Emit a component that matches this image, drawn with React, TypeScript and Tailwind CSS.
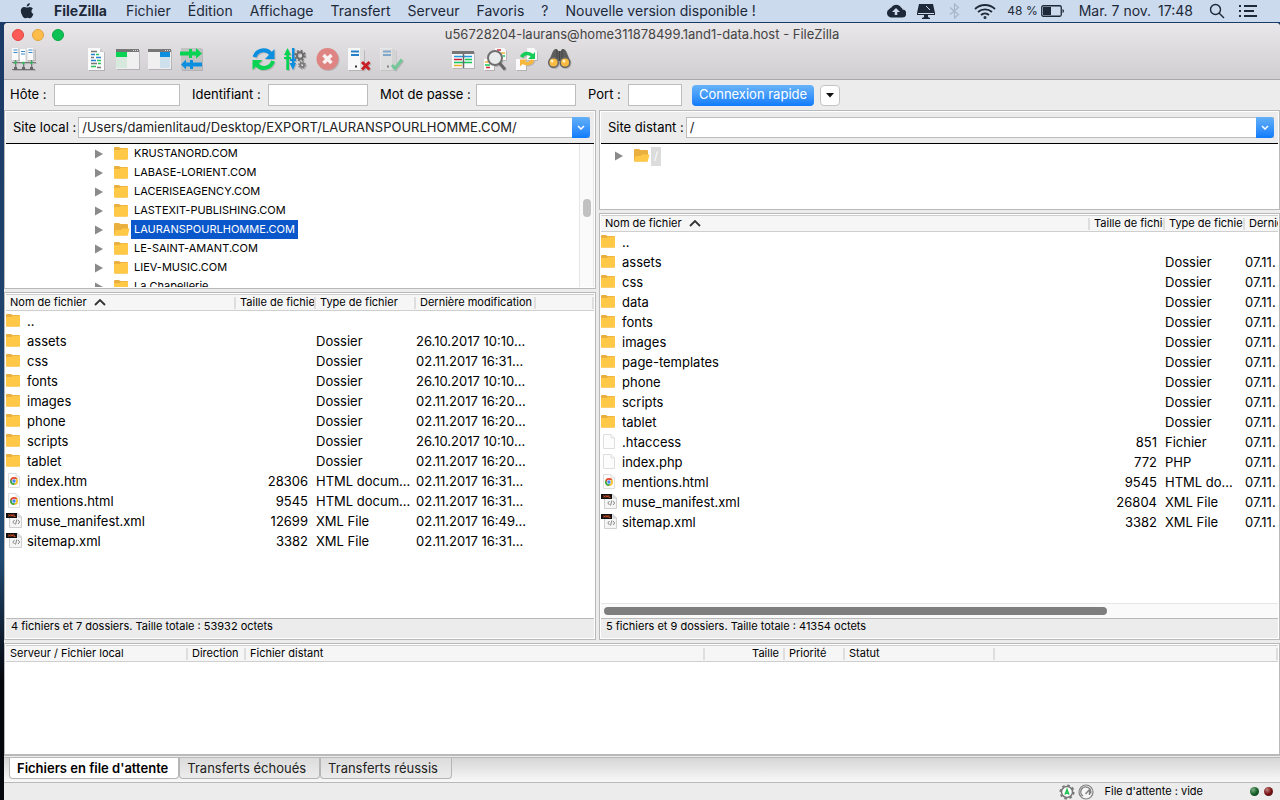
import React, { useState } from 'react';

type Kind = 'folder' | 'blank' | 'html' | 'xml';
type Row = { name: string; kind: Kind; size?: string; type?: string; date?: string };

const MENUS = ['Fichier', 'Édition', 'Affichage', 'Transfert', 'Serveur', 'Favoris', '?', 'Nouvelle version disponible !'];

const TREE = [
  'KRUSTANORD.COM',
  'LABASE-LORIENT.COM',
  'LACERISEAGENCY.COM',
  'LASTEXIT-PUBLISHING.COM',
  'LAURANSPOURLHOMME.COM',
  'LE-SAINT-AMANT.COM',
  'LIEV-MUSIC.COM',
  'La Chapellerie',
];

const LOCAL: Row[] = [
  { name: '..', kind: 'folder' },
  { name: 'assets', kind: 'folder', type: 'Dossier', date: '26.10.2017 10:10...' },
  { name: 'css', kind: 'folder', type: 'Dossier', date: '02.11.2017 16:31...' },
  { name: 'fonts', kind: 'folder', type: 'Dossier', date: '26.10.2017 10:10...' },
  { name: 'images', kind: 'folder', type: 'Dossier', date: '02.11.2017 16:20...' },
  { name: 'phone', kind: 'folder', type: 'Dossier', date: '02.11.2017 16:20...' },
  { name: 'scripts', kind: 'folder', type: 'Dossier', date: '26.10.2017 10:10...' },
  { name: 'tablet', kind: 'folder', type: 'Dossier', date: '02.11.2017 16:20...' },
  { name: 'index.htm', kind: 'html', size: '28306', type: 'HTML docum...', date: '02.11.2017 16:31...' },
  { name: 'mentions.html', kind: 'html', size: '9545', type: 'HTML docum...', date: '02.11.2017 16:31...' },
  { name: 'muse_manifest.xml', kind: 'xml', size: '12699', type: 'XML File', date: '02.11.2017 16:49...' },
  { name: 'sitemap.xml', kind: 'xml', size: '3382', type: 'XML File', date: '02.11.2017 16:31...' },
];

const REMOTE: Row[] = [
  { name: '..', kind: 'folder' },
  ...['assets', 'css', 'data', 'fonts', 'images', 'page-templates', 'phone', 'scripts', 'tablet'].map(
    (name): Row => ({ name, kind: 'folder', type: 'Dossier', date: '07.11.' })
  ),
  { name: '.htaccess', kind: 'blank', size: '851', type: 'Fichier', date: '07.11.' },
  { name: 'index.php', kind: 'blank', size: '772', type: 'PHP', date: '07.11.' },
  { name: 'mentions.html', kind: 'html', size: '9545', type: 'HTML do...', date: '07.11.' },
  { name: 'muse_manifest.xml', kind: 'xml', size: '26804', type: 'XML File', date: '07.11.' },
  { name: 'sitemap.xml', kind: 'xml', size: '3382', type: 'XML File', date: '07.11.' },
];

/* ---------- file icons ---------- */

const Folder: React.FC<{ open?: boolean }> = ({ open }) => (
  <svg width="16" height="14" viewBox="0 0 16 14" className="block shrink-0">
    <path d="M0 1Q0 0 1 0H5L6.500 1H13Q14 1 14 2V11.500Q14 12.500 13 12.500H1Q0 12.500 0 11.500Z" fill="#e9b03f" />
    {open ? (
      <path d="M0 12.500L1.500 7H7L8 5.500H15.500L14 11.500Q13.800 12.500 13 12.500Z" fill="#ffc847" />
    ) : (
      <path d="M0 3H5.500L7 1.800H14V11.500Q14 12.500 13 12.500H1Q0 12.500 0 11.500Z" fill="#ffc847" />
    )}
  </svg>
);

const Page: React.FC<{ children?: React.ReactNode }> = ({ children }) => (
  <svg width="16" height="16" viewBox="0 0 16 16" className="block shrink-0">
    <path d="M2.500 .5H10L13.500 4V14.500H2.500Z" fill="#fdfdfd" stroke="#dedede" />
    <path d="M10 .5V4H13.500" fill="#f2f2f2" stroke="#e2e2e2" />
    {children}
  </svg>
);

const FileIcon: React.FC<{ kind: Kind }> = ({ kind }) => {
  if (kind === 'folder') return <Folder />;
  if (kind === 'blank') return <Page />;
  if (kind === 'html')
    return (
      <Page>
        <circle cx="8" cy="8" r="4" fill="#fbc02d" />
        <path d="M4.500 6A4 4 0 0 1 11.500 6H8L6.200 9Z" fill="#e2453a" />
        <path d="M4.500 6A4 4 0 0 0 7.800 12L9.700 9L6.300 9Z" fill="#35a853" />
        <circle cx="8" cy="8" r="2.200" fill="#fff" />
        <circle cx="8" cy="8" r="1.700" fill="#4384f3" />
      </Page>
    );
  return (
    <svg width="16" height="16" viewBox="0 0 16 16" className="block shrink-0">
      <path d="M3.500 .5H12L15.500 4V14.500H3.500Z" fill="#f5f5f5" stroke="#cfcfcf" />
      <path d="M12 .5V4H15.500" fill="#ddd" stroke="#cfcfcf" />
      <path d="M0 0H11V5H0Z" fill="#111" />
      <path d="M2.500 1.500L4 3.500M4 1.500L2.500 3.500M5 3.500V1.500L6 3L7 1.500V3.500M8 1.500V3.500H9.500" stroke="#e8562a" strokeWidth=".8" fill="none" />
      <path d="M8.500 7L6.800 9L8.500 11M12 7L13.700 9L12 11M10.800 6.500L9.500 11.500" stroke="#888" fill="none" />
    </svg>
  );
};

/* ---------- toolbar icons ---------- */

const Svg: React.FC<{ children: React.ReactNode }> = ({ children }) => (
  <svg width="24" height="24" viewBox="0 0 24 24" fill="none" className="block drop-shadow-[1px_1px_0px_rgba(0,0,0,0.15)]">
    {children}
  </svg>
);

const SiteManagerIcon = () => (
  <Svg>
    <path d="M0 0H6L8 1V12H0ZM15 0H21L23 1V12H15Z" fill="#f9f9f9" />
    <path d="M6 0L8 1V12H6ZM21 0L23 1V12H21Z" fill="#cfcfcf" />
    <path d="M8 1H14L15.500 2V14H8Z" fill="#fff" />
    <path d="M13.500 1L15.500 2V14H13.500Z" fill="#d2d2d2" />
    <path d="M1.500 2H5.500M1.500 4.500H5.500M9 3.500H13M9 6H13M16.500 2H20.500M16.500 4.500H20.500" stroke="#3a8ccd" />
    <path d="M0 14.500H24M0 21.500H23M3.500 12V21M11.500 14V21M19.500 12V21" stroke="#777" />
    <path d="M2.500 14.500H4.500M10.500 15H12.500M18.500 14.500H20.500" stroke="#25c356" strokeWidth="2.500" />
    <path d="M2 20.500H5M10 20.500H13M18 20.500H21" stroke="#666" strokeWidth="3" />
  </Svg>
);

const LogIcon = () => (
  <Svg>
    <path d="M4 0H16L20 4V22H4Z" fill="#fbfbfb" />
    <path d="M16 0V4H20Z" fill="#ccc" />
    <path d="M7 3.500H13M7 9.500H10M7 15.500H13M13 19.500H17" stroke="#777" strokeWidth="1.500" />
    <path d="M7 6.500H11M12 9.500H17M7 12.500H12" stroke="#2583d1" strokeWidth="1.500" />
    <path d="M12 6.500H15M13 12.500H17M14 15.500H17M7 18.500H12" stroke="#27c55a" strokeWidth="1.500" />
  </Svg>
);

const PaneIcon: React.FC<{ side: 'left' | 'right' }> = ({ side }) => (
  <Svg>
    <path d="M0 1H23V21H0Z" fill="#f0f0f0" />
    <path d="M0 1H23V4H0Z" fill="#777" />
    <path d="M17 2.500H18M19 2.500H20M21 2.500H22" stroke="#ddd" />
    {side === 'left' ? (
      <>
        <path d="M0 4H11V9H0Z" fill="#08d353" />
        <path d="M0 9H11V20H0Z" fill="#d6e9dc" />
      </>
    ) : (
      <>
        <path d="M12 4H22V9H12Z" fill="#0d8fe0" />
        <path d="M12 9H22V20H12Z" fill="#cfe0ed" />
      </>
    )}
  </Svg>
);

const QueueIcon = () => (
  <Svg>
    <path d="M1 0H22V22H1Z" fill="#c2c2c2" />
    <path d="M0 3.500H9V1H12V3.500H16V0L22 5.500L16 10.500V7.500H12V10H9V7.500H0Z" fill="#08d353" />
    <path d="M22 14.500H13V12H10V14.500H6V11.500L1 16.500L6 21.500V18.500H10V21H13V18.500H22Z" fill="#0d8fe0" />
  </Svg>
);

const RefreshIcon = () => (
  <Svg>
    <path d="M2.500 9A9.500 9.500 0 0 1 19 6" stroke="#0d8fe0" strokeWidth="4" />
    <path d="M22.500 1V11H13Z" fill="#0d8fe0" />
    <path d="M21 13A9.500 9.500 0 0 1 5 17" stroke="#08d353" strokeWidth="4" />
    <path d="M.5 22V12H10.500Z" fill="#08d353" />
  </Svg>
);

const ProcessIcon = () => (
  <Svg>
    <path d="M0 7L3.500 0L7 7H5V9H7V11H5V22H2.300V11H0V9H2.300V7Z" fill="#08d353" />
    <path d="M8 0H10.500V11H12V13H10.500V15H12L9 22L5.500 15H8V13H6V11H8Z" fill="#0d8fe0" />
    <circle cx="16" cy="7.500" r="3.200" stroke="#6b6b6b" strokeWidth="2" />
    <circle cx="16" cy="7.500" r="4.800" stroke="#6b6b6b" strokeWidth="2" strokeDasharray="1.900 1.870" />
    <circle cx="18" cy="17" r="2" stroke="#777" strokeWidth="1.500" />
    <circle cx="18" cy="17" r="3.200" stroke="#777" strokeWidth="1.500" strokeDasharray="1.300 1.213" />
  </Svg>
);

const CancelIcon = () => (
  <Svg>
    <circle cx="11.500" cy="11" r="11" fill="#de8583" />
    <path d="M7.500 7L15.500 15M15.500 7L7.500 15" stroke="#f8f2f2" strokeWidth="3.500" />
  </Svg>
);

const ServerIcon: React.FC<{ ok?: boolean }> = ({ ok }) => (
  <Svg>
    <g opacity={ok ? 0.45 : 1}>
      <path d="M0 0H13L16 2V22H0Z" fill="#f8f8f8" />
      <path d="M12 0H13L16 2V22H12Z" fill="#ddd" />
      <path d="M3 3.500H11M3 7H11" stroke="#267fc9" strokeWidth="2" />
      <path d="M7 18.500H9" stroke="#333" strokeWidth="2" />
    </g>
    {ok ? (
      <path d="M12 17L15 20.500L22 11.500" stroke="#73c698" strokeWidth="3" />
    ) : (
      <path d="M14 14L21.500 21.500M21.500 14L14 21.500" stroke="#c81f27" strokeWidth="3" />
    )}
  </Svg>
);

const CompareIcon = () => (
  <Svg>
    <path d="M0 4H22V20H0Z" fill="#f8f8f8" />
    <path d="M0 3H22V6H0Z" fill="#777" />
    <path d="M2 8.500H20" stroke="#1d9ae1" strokeWidth="1.500" />
    <path d="M2 11.500H10" stroke="#c31f35" strokeWidth="1.500" />
    <path d="M13 11.500H20M2 14.500H20" stroke="#12c755" strokeWidth="1.500" />
    <path d="M2 17.500H10" stroke="#f0ac2e" strokeWidth="1.500" />
    <path d="M11.500 6V20" stroke="#666" strokeWidth="1.500" />
  </Svg>
);

const FindIcon = () => (
  <Svg>
    <path d="M11 0H20L22 2V12H11ZM0 11H10V22H0Z" fill="#fafafa" />
    <path d="M13 2H17M2 19.500H6" stroke="#d42d37" strokeWidth="1.500" />
    <path d="M17 5H21M1 14H5" stroke="#f1b53b" strokeWidth="1.500" />
    <path d="M19 8H21M1 17H6" stroke="#13c953" strokeWidth="1.500" />
    <circle cx="11" cy="10" r="7" fill="#e9eaeb" stroke="#707070" strokeWidth="2" />
    <path d="M15.500 15L21 21.500" stroke="#666" strokeWidth="3" />
  </Svg>
);

const SyncIcon = () => (
  <Svg>
    <path d="M11 0H18L21 3V12H11ZM0 11H10V22H0Z" fill="#fafafa" />
    <path d="M5.500 9A6.500 6.500 0 0 1 16 7.500" stroke="#13cd57" strokeWidth="3.500" />
    <path d="M19 4V11H12Z" fill="#13cd57" />
    <path d="M17 12A6.500 6.500 0 0 1 7.500 14.500" stroke="#f6b73c" strokeWidth="3.500" />
    <path d="M4 18.500V11.500H11.500Z" fill="#f6b73c" />
  </Svg>
);

const BinocularsIcon = () => (
  <Svg>
    <path d="M7 1H9L10 3H13L14 1H16L18 3L22.500 14L17 18L13 13H10L6 18L.5 14L5 3Z" fill="#5d5d5d" />
    <path d="M11.500 3V13M9 2V11M14 2V11" stroke="#444" />
    <circle cx="5.500" cy="14.500" r="4.800" fill="#f9bc40" stroke="#666" strokeWidth="1.500" />
    <circle cx="17" cy="14.500" r="4.800" fill="#f9bc40" stroke="#666" strokeWidth="1.500" />
    <circle cx="4" cy="13" r="1.500" fill="#fff3cf" />
    <circle cx="16" cy="13" r="1.500" fill="#fff3cf" />
  </Svg>
);

const TOOLBAR = [
  [{ label: 'Gestionnaire de sites', icon: <SiteManagerIcon /> }],
  [
    { label: 'Journal', icon: <LogIcon /> },
    { label: 'Arborescence locale', icon: <PaneIcon side="left" /> },
    { label: 'Arborescence distante', icon: <PaneIcon side="right" /> },
    { label: 'File de transfert', icon: <QueueIcon /> },
  ],
  [
    { label: 'Actualiser', icon: <RefreshIcon /> },
    { label: 'Traiter la file', icon: <ProcessIcon /> },
    { label: 'Annuler', icon: <CancelIcon /> },
    { label: 'Déconnecter', icon: <ServerIcon /> },
    { label: 'Reconnecter', icon: <ServerIcon ok /> },
  ],
  [
    { label: 'Filtres', icon: <CompareIcon /> },
    { label: 'Comparer', icon: <FindIcon /> },
    { label: 'Navigation synchronisée', icon: <SyncIcon /> },
    { label: 'Rechercher', icon: <BinocularsIcon /> },
  ],
];

/* ---------- top of the screen ---------- */

const MenuBar = () => (
  <header className="flex h-[23px] shrink-0 items-center border-b border-[#1b3a66] bg-[#cbdaed] text-sm text-[#1d2939]">
    <button aria-label="Apple" className="mx-5 block">
      <svg width="14" height="16" viewBox="0 0 14 16" fill="#1d2939" className="block">
        <path d="M9.800 0Q9.900 1.500 9 2.500Q8 3.700 6.700 3.600Q6.600 2.200 7.500 1.200Q8.400.2 9.800 0ZM12.900 5.500Q11.400 6.500 11.400 8.200Q11.500 10.200 13.400 11Q12.900 12.500 11.900 13.900Q11 15.200 10 15.200Q9.400 15.200 8.700 14.900Q7.500 14.400 6.300 14.900Q5.500 15.300 5 15.300Q3.900 15.200 2.700 13.500Q.6 10.500.8 7.600Q1.100 4.500 3.700 4Q4.600 3.900 5.700 4.300Q6.900 4.800 7.700 4.400Q9 3.900 10 3.900Q11.900 4.100 12.900 5.500Z" />
      </svg>
    </button>
    <nav className="flex gap-[17px] whitespace-nowrap">
      <button className="mr-0.5 font-bold">FileZilla</button>
      {MENUS.map((m) => (
        <button key={m}>{m}</button>
      ))}
    </nav>
    <div className="ml-auto mr-[22px] flex items-center whitespace-nowrap">
      <svg width="20" height="14" viewBox="0 0 20 14" className="mr-[11px]">
        <path d="M5 13.500A4.500 4.500 0 0 1 3.500 5Q4 3.500 5.500 3.500A5.500 5.500 0 0 1 15 3.500Q16.500 4 16.500 5.500A4 4 0 0 1 16 13.500Z" fill="#1d2939" />
        <path d="M10 4L14 8H11.300V11H8.700V8H6Z" fill="#cbdaed" />
      </svg>
      <svg width="18" height="15" viewBox="0 0 18 15" className="mr-[14px]">
        <path d="M2 0H16L18 9V11H11V13L13 14V15H5V14L7 13V11H0V9Z" fill="#1d2939" />
        <path d="M9 2L13 6M1 9.500H17" stroke="#cbdaed" />
      </svg>
      <svg width="11" height="16" viewBox="0 0 11 16" fill="none" stroke="#a8b6c9" strokeWidth="1.200" className="mr-[14px]">
        <path d="M1 4.500L9.500 11.500L5.500 15V1L9.500 4.500L1 11.500" />
      </svg>
      <svg width="22" height="15" viewBox="0 0 22 15" fill="none" stroke="#1d2939" strokeWidth="1.800" className="mr-[11px]">
        <path d="M1 5A14.500 14.500 0 0 1 21 5M4 8A10.500 10.500 0 0 1 18 8M7 11A6 6 0 0 1 15 11" />
        <circle cx="11" cy="13.500" r=".6" />
      </svg>
      <span className="mr-[3px] text-xs">48 %</span>
      <svg width="24" height="12" viewBox="0 0 24 12" className="mr-[14px]">
        <rect x=".75" y=".75" width="19.500" height="10.500" rx="1.500" fill="none" stroke="#1d2939" strokeWidth="1.300" />
        <path d="M2 2H10V10H2ZM21.500 4Q23 4.500 23 6T21.500 8Z" fill="#1d2939" />
      </svg>
      <span className="mr-[7px]">Mar. 7 nov.</span>
      <span className="mr-4">17:48</span>
      <svg width="16" height="16" viewBox="0 0 16 16" fill="none" stroke="#1d2939" strokeWidth="1.400" className="mr-[14px]">
        <circle cx="6.500" cy="6.500" r="5" />
        <path d="M10 10L15 15" />
      </svg>
      <svg width="19" height="12" viewBox="0 0 19 12" stroke="#1d2939" strokeWidth="2" fill="none">
        <path d="M0 1H2M0 6H2M0 11H2M5 1H18M5 6H15M5 11H18" />
      </svg>
    </div>
  </header>
);

const TitleBar = () => (
  <div className="h-[57px] shrink-0 rounded-t border-b border-[#a9a8a9] bg-gradient-to-b from-[#e9e7e9] to-[#d0ced0]">
    <div className="relative flex h-[23px] items-center justify-center">
      <div className="absolute left-2 flex gap-2">
        <button aria-label="Fermer" className="size-3 rounded-full border border-[#e2463f] bg-[#fc5b57]" />
        <button aria-label="Réduire" className="size-3 rounded-full border border-[#e0a33d] bg-[#fdbd4a]" />
        <button aria-label="Agrandir" className="size-3 rounded-full border border-[#0ba945] bg-[#0ac255]" />
      </div>
      <h1 className="text-[13px] text-[#444]">u56728204-laurans@home311878499.1and1-data.host - FileZilla</h1>
    </div>
    <div className="flex gap-12 px-2 pt-0.5">
      {TOOLBAR.map((group, i) => (
        <div key={i} className="flex gap-2">
          {group.map((t) => (
            <button key={t.label} aria-label={t.label}>
              {t.icon}
            </button>
          ))}
        </div>
      ))}
    </div>
  </div>
);

const INPUT = 'h-[22px] border border-[#bdbdbd] bg-white px-1 outline-none';

const QuickConnect = () => (
  <form className="flex h-[30px] shrink-0 items-center pl-[6px] text-[13px]" onSubmit={(e) => e.preventDefault()}>
    <label htmlFor="host" className="w-11">Hôte :</label>
    <input id="host" className={`mr-3 w-[126px] ${INPUT}`} />
    <label htmlFor="user" className="w-[76px]">Identifiant :</label>
    <input id="user" className={`mr-3 w-[100px] ${INPUT}`} />
    <label htmlFor="pass" className="w-24">Mot de passe :</label>
    <input id="pass" type="password" className={`mr-3 w-[100px] ${INPUT}`} />
    <label htmlFor="port" className="w-10">Port :</label>
    <input id="port" className={`mr-[10px] w-[54px] ${INPUT}`} />
    <button className="h-[21px] w-[122px] whitespace-nowrap rounded bg-gradient-to-b from-[#68b4f9] to-[#0a7bfb] text-white">Connexion rapide</button>
    <button aria-label="Historique" className="ml-[6px] flex h-[21px] w-5 items-center justify-center rounded border border-[#c4c4c4] bg-white">
      <svg width="8" height="5" viewBox="0 0 8 5">
        <path d="M0 0H8L4 4.500Z" fill="#111" />
      </svg>
    </button>
  </form>
);

/* ---------- panes ---------- */

const SiteBar: React.FC<{ id: string; label: string; path: string }> = ({ id, label, path }) => (
  <div className="flex h-8 shrink-0 items-center gap-0.5 border-b border-black bg-[#ececec] pl-[7px] pr-1 text-[13px]">
    <label htmlFor={id} className="whitespace-nowrap">{label}</label>
    <div className="relative flex-1">
      <select id={id} className="block h-[21px] w-full appearance-none border border-[#bdbdbd] bg-white pl-[3px] text-[#222] outline-none">
        <option>{path}</option>
      </select>
      <span className="pointer-events-none absolute inset-y-0 right-0 flex w-[18px] items-center justify-center rounded-r bg-gradient-to-b from-[#62b0f8] to-[#0a7bfb]">
        <svg width="8" height="5" viewBox="0 0 8 5" fill="none" stroke="#fff" strokeWidth="1.500">
          <path d="M1 1L4 4L7 1" />
        </svg>
      </span>
    </div>
  </div>
);

const Disclosure = () => (
  <svg width="8" height="10" viewBox="0 0 8 10" className="mr-[11px] block shrink-0">
    <path d="M0 .5L8 5L0 9.500Z" fill="#8a8a8a" />
  </svg>
);

const HeadCell: React.FC<{ label?: string; sorted?: boolean; right?: boolean }> = ({ label, sorted, right }) => (
  <th className="h-[17px] border-y border-[#cfcfcf] bg-[#f6f6f6] p-0 font-normal">
    <div className="flex h-[15px] items-center">
      <button className={`flex flex-1 items-center gap-[7px] overflow-hidden whitespace-nowrap pl-1 leading-[15px] ${right ? 'justify-end pr-1' : ''}`}>
        {label}
        {sorted && (
          <svg width="12" height="7" viewBox="0 0 12 7" fill="none" stroke="#333" strokeWidth="1.800">
            <path d="M1 6L6 1L11 6" />
          </svg>
        )}
      </button>
      <span className="h-3 w-0.5 shrink-0 bg-[#dedede]" />
    </div>
  </th>
);

const FileTable: React.FC<{ rows: Row[]; className: string; cols: React.ReactNode; heads: string[] }> = ({ rows, className, cols, heads }) => (
  <table className={`table-fixed border-separate border-spacing-0 text-left ${className}`}>
    {cols}
    <thead className="text-[11px]">
      <tr>
        {heads.map((h, i) => (
          <HeadCell key={i} label={h} sorted={i === 0} />
        ))}
      </tr>
    </thead>
    <tbody className="text-[13px] leading-5">
      {rows.map((r) => (
        <tr key={r.name}>
          <td className="h-5 p-0">
            <div className="flex h-5 items-center gap-[5px]">
              <FileIcon kind={r.kind} />
              {r.name}
            </div>
          </td>
          <td className="p-0 pr-2 text-right">{r.size}</td>
          <td className="whitespace-nowrap p-0">{r.type}</td>
          <td className="whitespace-nowrap p-0">{r.date}</td>
          {heads.length > 4 && <td className="p-0" />}
        </tr>
      ))}
    </tbody>
  </table>
);

const HEADS = ['Nom de fichier', 'Taille de fichier', 'Type de fichier', 'Dernière modification'];
const PANE = 'flex flex-col overflow-hidden border border-[#b9b9b9] bg-white p-px';
const SUMMARY = 'h-5 shrink-0 border-t border-[#b9b9b9] bg-[#ececec] pl-[5px] text-[11px] leading-[15px]';

const LocalSide = () => {
  const [selected, setSelected] = useState('LAURANSPOURLHOMME.COM');
  return (
    <section className="flex min-h-0 min-w-0 flex-col gap-[3px]">
      <div className={`h-[179px] shrink-0 ${PANE}`}>
        <SiteBar id="local" label="Site local :" path="/Users/damienlitaud/Desktop/EXPORT/LAURANSPOURLHOMME.COM/" />
        <div className="flex min-h-0 flex-1">
          <ul className="flex-1 overflow-hidden text-[11px]">
            {TREE.map((name) => (
              <li key={name} className="flex h-[19px] items-center pl-[89px]">
                <Disclosure />
                <Folder open={name === selected} />
                <button
                  onClick={() => setSelected(name)}
                  className={`ml-px h-[19px] px-[3px] ${name === selected ? 'bg-[#0a57cb] text-white' : ''}`}
                >
                  {name}
                </button>
              </li>
            ))}
          </ul>
          <div className="w-[15px] border-x border-[#e6e6e6] bg-[#fafafa] px-[3px] pt-[55px]">
            <div className="h-[18px] w-2 rounded-full bg-[#c1c1c1]" />
          </div>
        </div>
      </div>
      <div className={`flex-1 ${PANE}`}>
        <div className="min-h-0 flex-1 overflow-hidden">
          <FileTable
            rows={LOCAL}
            className="w-full"
            heads={[...HEADS, '']}
            cols={
              <colgroup>
                <col className="w-[230px]" />
                <col className="w-20" />
                <col className="w-[100px]" />
                <col className="w-[120px]" />
                <col />
              </colgroup>
            }
          />
        </div>
        <p className={SUMMARY}>4 fichiers et 7 dossiers. Taille totale : 53932 octets</p>
      </div>
    </section>
  );
};

const RemoteSide = () => (
  <section className="flex min-h-0 min-w-0 flex-col gap-[3px]">
    <div className={`h-[100px] shrink-0 ${PANE}`}>
      <SiteBar id="remote" label="Site distant :" path="/" />
      <div className="flex h-6 items-center pl-[14px] text-[11px]">
        <Disclosure />
        <Folder open />
        <button className="ml-px h-[19px] bg-[#dcdcdc] px-[3px] text-white">/</button>
      </div>
    </div>
    <div className={`flex-1 ${PANE}`}>
      <div className="min-h-0 flex-1 overflow-hidden">
        <FileTable
          rows={REMOTE}
          className="w-[905px]"
          heads={HEADS}
          cols={
            <colgroup>
              <col className="w-[489px]" />
              <col className="w-[75px]" />
              <col className="w-20" />
              <col />
            </colgroup>
          }
        />
      </div>
      <div className="h-[15px] shrink-0 border-t border-[#e6e6e6] bg-[#fafafa] px-[3px] pt-[3px]">
        <div className="h-2 w-3/4 rounded-full bg-[#7e7e7e]" />
      </div>
      <p className={SUMMARY}>5 fichiers et 9 dossiers. Taille totale : 41354 octets</p>
    </div>
  </section>
);

const TABS = ["Fichiers en file d'attente", 'Transferts échoués', 'Transferts réussis'];

const Queue = () => {
  const [tab, setTab] = useState(0);
  return (
    <section className="mt-[3px] shrink-0">
      <div className="h-[113px] border border-b-2 border-[#b9b9b9] bg-white p-px">
        <table className="w-full table-fixed border-separate border-spacing-0 text-left text-[11px]">
          <colgroup>
            <col className="w-[182px]" />
            <col className="w-[58px]" />
            <col className="w-[459px]" />
            <col className="w-20" />
            <col className="w-[60px]" />
            <col className="w-[150px]" />
            <col />
          </colgroup>
          <thead>
            <tr>
              <HeadCell label="Serveur / Fichier local" />
              <HeadCell label="Direction" />
              <HeadCell label="Fichier distant" />
              <HeadCell label="Taille" right />
              <HeadCell label="Priorité" />
              <HeadCell label="Statut" />
              <HeadCell />
            </tr>
          </thead>
        </table>
      </div>
      <div className="mt-px h-[26px] border-y border-[#b9b9b9] bg-gradient-to-b from-[#d6d6d6] to-[#f8f8f8] pl-[5px]">
        <div role="tablist" className="flex text-[13px]">
          {TABS.map((t, i) => (
            <button
              key={t}
              role="tab"
              aria-selected={i === tab}
              onClick={() => setTab(i)}
              className={`h-[21px] rounded-b border border-t-0 border-[#b5b5b5] pl-[7px] text-left leading-5 whitespace-nowrap ${
                i === tab ? 'bg-white pr-[10px] font-semibold text-black' : 'bg-gradient-to-b from-[#dcdcdc] to-[#ececec] pr-[13px] text-[#222]'
              }`}
            >
              {t}
            </button>
          ))}
        </div>
      </div>
    </section>
  );
};

const StatusBar = () => (
  <footer className="flex h-[17px] shrink-0 items-center bg-[#ececec] pr-[7px] text-[11px]">
    <svg width="16" height="16" viewBox="0 0 16 16" className="ml-auto mr-[3px]">
      <circle cx="8" cy="8" r="5.500" fill="#fff" stroke="#777" strokeWidth="1.500" />
      <circle cx="8" cy="8" r="6.800" fill="none" stroke="#777" strokeWidth="1.500" strokeDasharray="2.700 2.641" />
      <path d="M6 10.500L8 5.500L10 10.500M6.800 9.200H9.200" stroke="#1fc04f" strokeWidth="1.500" fill="none" />
    </svg>
    <svg width="16" height="16" viewBox="0 0 16 16" fill="none" stroke="#808080" className="mr-[10px]">
      <circle cx="8" cy="8" r="7" fill="#f7f7f7" strokeWidth="1.200" />
      <path d="M5 12A5 5 0 1 1 12.500 9.500M7.500 10L11.500 5.500V11" strokeWidth="1.400" />
    </svg>
    <span className="mr-[47px]">File d'attente : vide</span>
    <span className="mr-[5px] size-[9px] rounded-full bg-radial-[at_35%_30%] from-[#7fae86] via-[#15612a] to-[#0a2d12]" />
    <span className="size-[9px] rounded-full bg-radial-[at_35%_30%] from-[#c08080] via-[#7a1414] to-[#3a0808]" />
  </footer>
);

const App: React.FC = () => (
  <div className="flex h-screen flex-col overflow-hidden bg-linear-to-b from-[#1b3a66] from-5% via-[#1f4a73] via-70% to-[#05070d] to-85% font-['Inter','Liberation_Sans',sans-serif] text-black">
    <MenuBar />
    <main className="ml-1 flex min-h-0 flex-1 flex-col rounded-t bg-[#ececec]">
      <TitleBar />
      <QuickConnect />
      <div className="grid min-h-0 flex-1 grid-cols-[592fr_681fr] grid-rows-1 gap-[3px]">
        <LocalSide />
        <RemoteSide />
      </div>
      <Queue />
      <StatusBar />
    </main>
  </div>
);

export default App;
